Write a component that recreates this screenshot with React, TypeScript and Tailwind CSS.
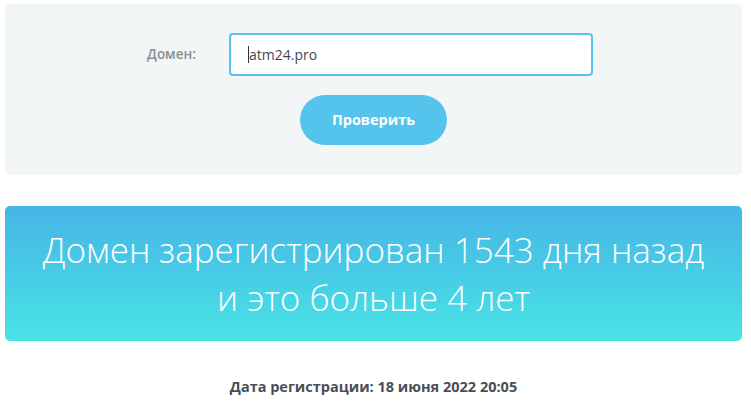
import React from "react";

export default function App() {
  return (
    <div className="w-[751px] h-[419px] bg-white pl-[5px] pt-[4px] font-['Open_Sans',sans-serif]">
      <div className="w-[737px]">
        <div className="h-[171px] rounded-[5px] bg-[#f3f6f7] flex flex-col pt-[29px]">
          <div className="flex items-center">
            <div className="w-[191px] text-right text-[13.5px] font-semibold text-[#8b8e90]">Домен:</div>
            <div className="ml-[33px] w-[364px] h-[43px] rounded-[4px] border-2 border-[#54c4ec] bg-white flex items-center pl-[17px]">
              <span className="w-px h-[17px] bg-[#333]"></span>
              <span className="text-[14px] text-[#454a50]">atm24.pro</span>
            </div>
          </div>
          <div className="flex justify-center">
            <button className="mt-[19px] w-[147px] h-[50px] rounded-full bg-[#54c4ec] text-white text-[14.5px] font-bold">
              Проверить
            </button>
          </div>
        </div>
        <div className="mt-[31px] h-[135px] rounded-[5px] bg-gradient-to-b from-[#47b5e5] to-[#48e3e5] flex flex-col items-center justify-center text-white text-[35px] font-light leading-[48px]">
          <div>Домен зарегистрирован 1543 дня назад</div>
          <div>и это больше 4 лет</div>
        </div>
        <div className="mt-[35px] text-center text-[14.5px] font-bold text-[#4a4f57]">
          Дата регистрации: 18 июня 2022 20:05
        </div>
      </div>
    </div>
  );
}
